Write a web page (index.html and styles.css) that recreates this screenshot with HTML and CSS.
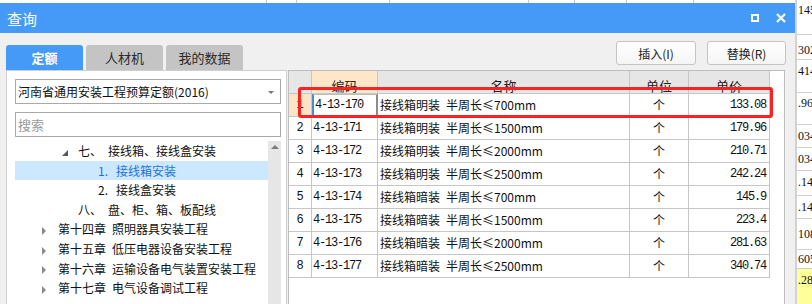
FILE: index.html
```html
<!DOCTYPE html>
<html lang="zh-CN">
<head>
    <meta charset="UTF-8">
    <title>查询</title>
    <link rel="stylesheet" href="styles.css">
</head>
<body>

<div class="screen">
    <div class="front">
        <div class="topstrip">
            <span class="c1"></span><span class="c2"></span><span class="c3"></span><span class="c4"></span><span class="c5"></span><span class="c6"></span><span class="c7"></span>
        </div>

        <div class="dialog">
            <div class="titlebar">
                <span class="title">查询</span>
                <span class="btn-max"></span>
                <svg class="btn-close" width="10" height="10" viewBox="0 0 10 10">
                    <path d="M1 1 L9 9 M9 1 L1 9" stroke="#fff" stroke-width="2.2" fill="none"/>
                </svg>
            </div>

            <div class="toolbar">
                <div class="tabs">
                    <div class="tab active">定额</div>
                    <div class="tab">人材机</div>
                    <div class="tab">我的数据</div>
                </div>
                <div class="actions">
                    <button class="btn">插入(I)</button>
                    <button class="btn btn-r">替换(R)</button>
                </div>
            </div>

            <div class="main">
                <div class="left">
                    <div class="select">河南省通用安装工程预算定额(2016)<span class="caret"></span></div>
                    <div class="search">搜索</div>
                    <div class="tree-wrap">
                        <ul class="tree">
                            <li class="node lv2"><i class="tri-open"></i>七、&ensp;接线箱、接线盒安装</li>
                            <li class="node lv3 sel"><span class="num">1.</span>接线箱安装</li>
                            <li class="node lv3"><span class="num">2.</span>接线盒安装</li>
                            <li class="node lv2b">八、&ensp;盘、柜、箱、板配线</li>
                            <li class="node lv1"><i class="tri"></i>第十四章&ensp;照明器具安装工程</li>
                            <li class="node lv1"><i class="tri"></i>第十五章&ensp;低压电器设备安装工程</li>
                            <li class="node lv1"><i class="tri"></i>第十六章&ensp;运输设备电气装置安装工程</li>
                            <li class="node lv1"><i class="tri"></i>第十七章&ensp;电气设备调试工程</li>
                        </ul>
                        <div class="scrollbar"><span class="up"></span></div>
                    </div>
                </div>

                <div class="grid-panel">
                    <div class="row head">
                        <div></div>
                        <div class="hl">编码</div>
                        <div>名称</div>
                        <div>单位</div>
                        <div>单价</div>
                    </div>
                    <div class="row current">
                        <div class="no">1</div>
                        <div class="code focus">4-13-170</div>
                        <div class="name">接线箱明装&ensp;半周长≤700mm</div>
                        <div class="unit">个</div>
                        <div class="price">133.08</div>
                    </div>
                    <div class="row">
                        <div class="no">2</div>
                        <div class="code">4-13-171</div>
                        <div class="name">接线箱明装&ensp;半周长≤1500mm</div>
                        <div class="unit">个</div>
                        <div class="price">179.96</div>
                    </div>
                    <div class="row">
                        <div class="no">3</div>
                        <div class="code">4-13-172</div>
                        <div class="name">接线箱明装&ensp;半周长≤2000mm</div>
                        <div class="unit">个</div>
                        <div class="price">210.71</div>
                    </div>
                    <div class="row">
                        <div class="no">4</div>
                        <div class="code">4-13-173</div>
                        <div class="name">接线箱明装&ensp;半周长≤2500mm</div>
                        <div class="unit">个</div>
                        <div class="price">242.24</div>
                    </div>
                    <div class="row">
                        <div class="no">5</div>
                        <div class="code">4-13-174</div>
                        <div class="name">接线箱暗装&ensp;半周长≤700mm</div>
                        <div class="unit">个</div>
                        <div class="price">145.9</div>
                    </div>
                    <div class="row">
                        <div class="no">6</div>
                        <div class="code">4-13-175</div>
                        <div class="name">接线箱暗装&ensp;半周长≤1500mm</div>
                        <div class="unit">个</div>
                        <div class="price">223.4</div>
                    </div>
                    <div class="row">
                        <div class="no">7</div>
                        <div class="code">4-13-176</div>
                        <div class="name">接线箱暗装&ensp;半周长≤2000mm</div>
                        <div class="unit">个</div>
                        <div class="price">281.63</div>
                    </div>
                    <div class="row">
                        <div class="no">8</div>
                        <div class="code">4-13-177</div>
                        <div class="name">接线箱暗装&ensp;半周长≤2500mm</div>
                        <div class="unit">个</div>
                        <div class="price">340.74</div>
                    </div>
                </div>
            </div>

            <!-- red annotation box around the first result -->
            <div class="mark"></div>
        </div>
    </div>

    <div class="sheet">
        <div>145</div>
        <div>3021</div>
        <div>414</div>
        <div>.96</div>
        <div>034</div>
        <div>034</div>
        <div>.14</div>
        <div>.14</div>
        <div>108</div>
        <div>605</div>
        <div class="yellow">.285</div>
    </div>
</div>

</body>
</html>
```

FILE: styles.css
```css
* {
    box-sizing: border-box;
}
body {
    margin: 0;
    background: #fff;
    font-family: "Noto Sans CJK SC", "Noto Sans", sans-serif;
    font-size: 12px;
    color: #111;
}
.screen {
    display: flex;
    width: 812px;
    height: 304px;
    overflow: hidden;
}
.front {
    width: 795px;
    flex-shrink: 0;
    display: flex;
    flex-direction: column;
}

/* bit of the sheet behind the dialog */
.topstrip {
    height: 3px;
    display: flex;
}
.topstrip span {
    border-right: 1px solid #c8c8c8;
}
.topstrip .c1 { width: 267px; }
.topstrip .c2 { width: 30px; }
.topstrip .c3 { width: 93px; }
.topstrip .c4 { width: 139px; }
.topstrip .c5 { width: 46px; }
.topstrip .c6 { width: 52px; }
.topstrip .c7 { width: 67px; }

.dialog {
    flex: 1;
    position: relative;
    background: #f0f0f0;
    display: flex;
    flex-direction: column;
    min-height: 0;
}
.titlebar {
    height: 30px;
    background: #4599f7;
    color: #fff;
    display: flex;
    align-items: center;
    padding: 0 9px 0 7px;
}
.title {
    flex: 1;
    font-size: 15px;
}
.btn-max {
    width: 8px;
    height: 8px;
    border: 2px solid #fff;
    margin-right: 17px;
}

.toolbar {
    height: 37px;
    display: flex;
    justify-content: space-between;
    padding: 0 9px 0 6px;
}
.tabs {
    display: flex;
    gap: 3px;
    align-self: flex-end;
}
.tab {
    width: 77px;
    height: 25px;
    line-height: 25px;
    text-align: center;
    font-size: 13px;
    color: #2b2b2b;
    background: #c4c4c4;
    border-radius: 3px 3px 0 0;
}
.tab.active {
    background: #4599f7;
    color: #fff;
    font-weight: bold;
}
.actions {
    display: flex;
    gap: 11px;
    padding-top: 8px;
}
.btn {
    width: 80px;
    height: 24px;
    padding: 0;
    font-family: "Noto Sans CJK SC", sans-serif;
    font-size: 12px;
    color: #222;
    background: linear-gradient(#ffffff, #f5f5f5);
    border: 1px solid #c4c4c4;
    border-radius: 3px;
}
.btn-r {
    width: 79px;
}

.main {
    flex: 1;
    min-height: 0;
    display: flex;
    gap: 1px;
    padding: 0 10px 0 6px;
}
.left {
    width: 281px;
    background: #fff;
    border: 1px solid #cfcfcf;
    border-bottom: 0;
    padding: 8px 5px 0 8px;
    display: flex;
    flex-direction: column;
}
.select, .search {
    height: 25px;
    line-height: 23px;
    border: 1px solid #a9a9a9;
    padding-left: 2px;
    font-size: 12px;
    position: relative;
}
.caret {
    position: absolute;
    right: 6px;
    top: 11px;
    border-left: 3px solid transparent;
    border-right: 3px solid transparent;
    border-top: 3px solid #777;
}
.search {
    margin-top: 8px;
    color: #9a9a9a;
    font-size: 13px;
}
.tree-wrap {
    flex: 1;
    min-height: 0;
    margin-top: 4px;
    display: flex;
    overflow: hidden;
}
.tree {
    list-style: none;
    margin: 0;
    padding: 0;
    width: 253px;
}
.node {
    height: 19.6px;
    line-height: 19.6px;
    white-space: nowrap;
}
.lv1 { padding-left: 27px; }
.lv2 { padding-left: 47px; }
.lv2b { padding-left: 63px; }
.lv3 { padding-left: 83px; }
.num {
    display: inline-block;
    width: 18px;
}
.sel {
    background: #cce8ff;
    color: #1f72de;
}
.tri {
    display: inline-block;
    vertical-align: middle;
    border-left: 4px solid #8a8a8a;
    border-top: 4px solid transparent;
    border-bottom: 4px solid transparent;
    margin-right: 12px;
}
.tri-open {
    display: inline-block;
    vertical-align: middle;
    border-style: solid;
    border-width: 0 0 6px 6px;
    border-color: transparent transparent #595959 transparent;
    margin-right: 10px;
}
.scrollbar {
    width: 13px;
    background: #e6e6e6;
    display: flex;
    justify-content: center;
    padding-top: 4px;
}
.up {
    width: 0;
    height: 0;
    border-left: 4px solid transparent;
    border-right: 4px solid transparent;
    border-bottom: 4px solid #7a7a7a;
}

/* result grid */
.grid-panel {
    width: 497px;
    background: #fff;
    border: 1px solid #bdbdbd;
    border-bottom: 0;
}
.row {
    display: grid;
    grid-template-columns: 23px 66px 252px 59px 81px;
    height: 23px;
}
.row > div {
    border-right: 1px solid #c6c6c6;
    border-bottom: 1px solid #c6c6c6;
    line-height: 22px;
    white-space: nowrap;
    overflow: hidden;
}
.head > div {
    background: #e6e6e6;
    text-align: center;
    font-size: 13px;
    color: #222;
    padding-top: 4px;
}
.head > div.hl {
    background: #fee6c9;
}
.no {
    text-align: center;
    font-family: "Liberation Mono", monospace;
    font-size: 12px;
}
.current .no {
    background: #fde4c5;
}
.code {
    padding-left: 1px;
    font-family: "Liberation Mono", monospace;
    font-size: 12px;
    letter-spacing: -1.2px;
}
.code.focus {
    border-left: 2px solid #3c8de6;
    border-right: 2px solid #8c8c8c;
    border-top: 1px solid #bdbdbd;
    line-height: 20px;
}
.name {
    padding-left: 2px;
    font-size: 12px;
}
.unit {
    text-align: center;
}
.price {
    text-align: right;
    padding-right: 3px;
    font-family: "Liberation Mono", monospace;
    font-size: 12px;
    letter-spacing: -1.2px;
}

.mark {
    position: absolute;
    left: 298px;
    top: 84px;
    width: 475px;
    height: 31px;
    border: 3px solid #fb2222;
    border-radius: 3px;
}

/* spreadsheet peeking out on the right */
.sheet {
    flex: 1;
    border-left: 2px solid #d2d2d2;
    font-family: "Liberation Serif", serif;
    font-size: 12px;
}
.sheet div {
    border-bottom: 1px solid #d0d0d0;
    white-space: nowrap;
    overflow: hidden;
    padding-left: 1px;
    height: 23px;
    line-height: 22px;
}
.sheet div:nth-child(1) { height: 35px; line-height: 20px; }
.sheet div:nth-child(2) { height: 25px; line-height: 30px; }
.sheet div:nth-child(3) { height: 33px; }
.sheet div:nth-child(4) { height: 32px; line-height: 20px; }
.sheet div:nth-child(7) { height: 25px; }
.sheet div:nth-child(9) { height: 31px; line-height: 30px; }
.sheet div:nth-child(10) { height: 19px; line-height: 18px; }
.sheet .yellow {
    height: 40px;
    background: #ffff99;
}
```
